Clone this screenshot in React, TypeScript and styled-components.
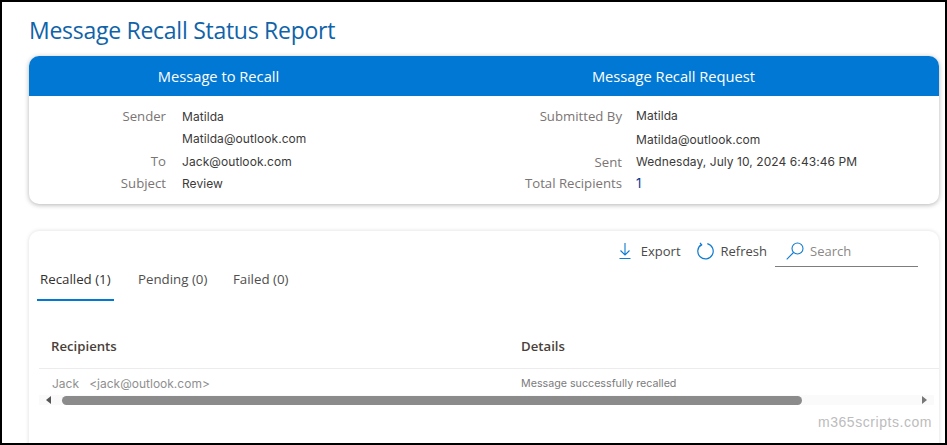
import styled, { createGlobalStyle } from "styled-components";

const GlobalStyle = createGlobalStyle`
  html, body {
    margin: 0;
    padding: 0;
    background: #fff;
  }
`;

const uiFont = `"Open Sans", "Noto Sans", sans-serif`;
const valueFont = `Inter, Roboto, sans-serif`;

const Frame = styled.main`
  position: relative;
  box-sizing: border-box;
  width: 947px;
  height: 445px;
  border: 2px solid #000;
  padding: 14px 6px 0 27px;
  overflow: hidden;
  background: #fff;
  font-family: ${uiFont};
`;

const Title = styled.h1`
  margin: 0 0 12px;
  height: 28px;
  font-size: 23px;
  line-height: 28px;
  font-weight: 400;
  letter-spacing: -0.27px;
  color: #0f63a8;
  white-space: nowrap;
`;

const SummaryCard = styled.section`
  display: grid;
  grid-template-columns: 455px 455px;
  height: 148px;
  border-radius: 10px;
  overflow: hidden;
  background: #fff;
  box-shadow: 0 1px 5px rgba(0, 0, 0, 0.3);
`;

const SummaryColumn = styled.div`
  display: flex;
  flex-direction: column;
`;

const ColumnHeader = styled.h2`
  margin: 0;
  height: 40px;
  padding-right: 76px;
  background: #0078d4;
  color: #fff;
  font-size: 14.7px;
  line-height: 40px;
  font-weight: 400;
  text-align: center;
  white-space: nowrap;
`;

const Rows = styled.dl`
  display: flex;
  flex-direction: column;
  margin: 0;
  padding-top: 9px;
`;

const Row = styled.div<{ $height: number; $label: number; $gap: number }>`
  display: grid;
  grid-template-columns: ${(p) => p.$label}px 1fr;
  column-gap: ${(p) => p.$gap}px;
  align-items: center;
  height: ${(p) => p.$height}px;
`;

const Label = styled.dt`
  margin: 0;
  font-size: 13.2px;
  text-align: right;
  color: #7a7574;
  white-space: nowrap;
`;

const Value = styled.dd<{ $link?: boolean }>`
  margin: 0;
  font-family: ${valueFont};
  font-size: ${(p) => (p.$link ? "13px" : "12px")};
  letter-spacing: 0.07px;
  color: ${(p) => (p.$link ? "#0b3a8c" : "#3b3a39")};
  white-space: nowrap;
`;

const ResultsCard = styled.section`
  height: 240px;
  margin-top: 27px;
  border-radius: 10px 10px 0 0;
  background: #fff;
  box-shadow: 0 0 4px rgba(0, 0, 0, 0.14);
  display: flex;
  flex-direction: column;
`;

const Toolbar = styled.div`
  display: flex;
  justify-content: flex-end;
  align-items: center;
  height: 36px;
  padding-right: 21px;
`;

const ToolButton = styled.button<{ $gap: number; $margin: number }>`
  display: flex;
  align-items: center;
  gap: ${(p) => p.$gap}px;
  margin-right: ${(p) => p.$margin}px;
  padding: 4px 0 0;
  border: 0;
  background: none;
  font-family: ${uiFont};
  font-size: 13px;
  color: #4a4a4a;
`;

const SearchBox = styled.label`
  display: flex;
  align-items: center;
  gap: 6px;
  box-sizing: border-box;
  width: 143px;
  height: 36px;
  padding: 5px 0 0 11px;
  border-bottom: 1px solid #7d7d7d;
  font-size: 13px;
  color: #8a8886;
`;

const Tabs = styled.nav`
  display: flex;
  height: 34px;
  margin-left: 8px;
`;

const Tab = styled.div<{ $active?: boolean; $width: number }>`
  box-sizing: border-box;
  width: ${(p) => p.$width}px;
  height: 34px;
  padding: 3px 0 0 ${(p) => (p.$active ? 3 : 24)}px;
  border-bottom: 2px solid ${(p) => (p.$active ? "#0078d4" : "transparent")};
  font-size: 13.3px;
  line-height: 18px;
  color: ${(p) => (p.$active ? "#323130" : "#4f4f4f")};
  white-space: nowrap;
`;

const TableHead = styled.div`
  display: grid;
  grid-template-columns: 470px 1fr;
  align-items: center;
  box-sizing: border-box;
  height: 68px;
  margin-left: 10px;
  padding: 22px 0 0 12px;
  border-bottom: 1px solid #ececec;
  font-size: 13.2px;
  font-weight: 600;
  color: #4a3f3a;
`;

const TableRow = styled.div`
  display: grid;
  grid-template-columns: 470px 1fr;
  align-items: center;
  height: 28px;
  margin-left: 10px;
  padding-left: 13px;
`;

const RowName = styled.span`
  font-family: ${valueFont};
  font-size: 12px;
  white-space: pre;
  color: #8f8f8f;
`;

const RowDetail = styled.span`
  margin-left: -1px;
  font-family: ${valueFont};
  font-size: 10.7px;
  color: #7b7b7b;
`;

const ScrollBar = styled.div`
  display: flex;
  align-items: center;
  height: 10px;
  margin: -2px 5px 0 10px;
  padding: 0 7px;
  background: #fafafa;
`;

const ScrollThumb = styled.div`
  width: 740px;
  height: 9px;
  margin: 0 auto 0 11px;
  border-radius: 5px;
  background: #8b8b8b;
`;

const ArrowLeft = styled.span`
  border: 4px solid transparent;
  border-left: 0;
  border-right: 5px solid #555;
`;

const ArrowRight = styled.span`
  border: 4px solid transparent;
  border-right: 0;
  border-left: 5px solid #777;
`;

const Watermark = styled.div`
  position: absolute;
  right: 13px;
  bottom: 13px;
  font-family: "Liberation Sans", sans-serif;
  font-size: 14px;
  letter-spacing: 0.55px;
  color: #bcbcbc;
`;

const ExportIcon = () => (
  <svg width="14" height="18" viewBox="0 0 14 18" fill="none" stroke="#0f7bd0" strokeWidth="1.1">
    <path d="M7 1v12M2.500 8.500 7 13l4.500-4.500M1.500 16.500h11" />
  </svg>
);

const RefreshIcon = () => (
  <svg width="18" height="18" viewBox="0 0 18 18" fill="none" stroke="#0f7bd0" strokeWidth="1.2">
    <path d="M5.500 2.600A7.700 7.700 0 1 0 11.300 1.700" />
    <path d="M4 .8 5.700 2.800 3.400 4.500" />
  </svg>
);

const SearchIcon = () => (
  <svg width="18" height="18" viewBox="0 0 18 18" fill="none" stroke="#0f7bd0" strokeWidth="1.1">
    <circle cx="11.500" cy="6.500" r="5.500" />
    <path d="M7.500 10.500 .7 17.300" />
  </svg>
);

const sender = [
  { label: "Sender", value: "Matilda", height: 22 },
  { label: "", value: "Matilda@outlook.com", height: 23 },
  { label: "To", value: "Jack@outlook.com", height: 22 },
  { label: "Subject", value: "Review", height: 22 },
];

const request = [
  { label: "Submitted By", value: "Matilda", height: 21 },
  { label: "", value: "Matilda@outlook.com", height: 26 },
  { label: "Sent", value: "Wednesday, July 10, 2024 6:43:46 PM", height: 19 },
  { label: "Total Recipients", value: "1", height: 24, link: true },
];

export default function App() {
  return (
    <>
      <GlobalStyle />
      <Frame>
        <Title>Message Recall Status Report</Title>
        <SummaryCard>
          <SummaryColumn>
            <ColumnHeader>Message to Recall</ColumnHeader>
            <Rows>
              {sender.map((r) => (
                <Row key={r.value} $height={r.height} $label={137} $gap={16}>
                  <Label>{r.label}</Label>
                  <Value>{r.value}</Value>
                </Row>
              ))}
            </Rows>
          </SummaryColumn>
          <SummaryColumn>
            <ColumnHeader>Message Recall Request</ColumnHeader>
            <Rows>
              {request.map((r) => (
                <Row key={r.value} $height={r.height} $label={138} $gap={14}>
                  <Label>{r.label}</Label>
                  <Value $link={r.link}>{r.value}</Value>
                </Row>
              ))}
            </Rows>
          </SummaryColumn>
        </SummaryCard>
        <ResultsCard>
          <Toolbar>
            <ToolButton $gap={9} $margin={15}>
              <ExportIcon />
              Export
            </ToolButton>
            <ToolButton $gap={7} $margin={8}>
              <RefreshIcon />
              Refresh
            </ToolButton>
            <SearchBox>
              <SearchIcon />
              Search
            </SearchBox>
          </Toolbar>
          <Tabs>
            <Tab $active $width={77}>
              Recalled (1)
            </Tab>
            <Tab $width={95}>Pending (0)</Tab>
            <Tab $width={90}>Failed (0)</Tab>
          </Tabs>
          <TableHead>
            <span>Recipients</span>
            <span>Details</span>
          </TableHead>
          <TableRow>
            <RowName>{"Jack   <jack@outlook.com>"}</RowName>
            <RowDetail>Message successfully recalled</RowDetail>
          </TableRow>
          <ScrollBar>
            <ArrowLeft />
            <ScrollThumb />
            <ArrowRight />
          </ScrollBar>
        </ResultsCard>
        <Watermark>m365scripts.com</Watermark>
      </Frame>
    </>
  );
}
